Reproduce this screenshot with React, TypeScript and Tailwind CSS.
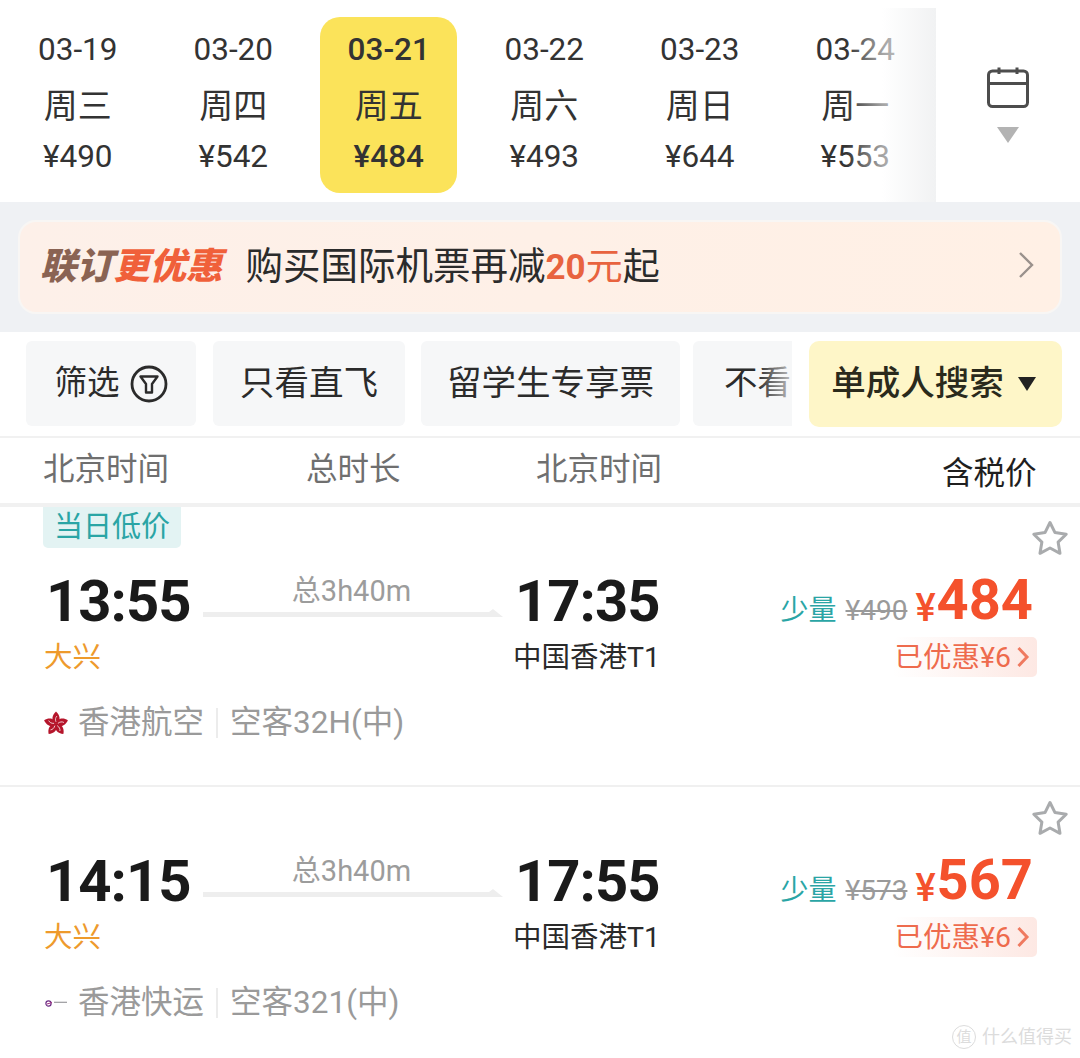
const days = [
  { d: "03-19", w: "周三", p: "¥490" },
  { d: "03-20", w: "周四", p: "¥542" },
  { d: "03-21", w: "周五", p: "¥484", on: true },
  { d: "03-22", w: "周六", p: "¥493" },
  { d: "03-23", w: "周日", p: "¥644" },
  { d: "03-24", w: "周一", p: "¥553" },
];

function Star() {
  return (
    <svg className="absolute right-[11px] top-[13px]" width="38" height="37" viewBox="0 0 38 37" fill="none">
      <path
        d="M19 2.5 L24 12.6 L35.2 14.2 L27.1 22.1 L29 33.3 L19 28 L9 33.3 L10.9 22.1 L2.8 14.2 L14 12.6 Z"
        stroke="#a9abad"
        strokeWidth="3"
        strokeLinejoin="round"
      />
    </svg>
  );
}

function CathayLogo() {
  return (
    <svg width="24" height="24" viewBox="0 0 24 24" className="shrink-0">
      {[0, 72, 144, 216, 288].map((a) => (
        <g key={a} transform={`rotate(${a} 12 13)`}>
          <path d="M12 13 C6.5 10 8 4 12 0.5 C16 4 17.5 10 12 13 Z" fill="#b5152b" />
          <path d="M12 11 C11 8.5 11.5 6.5 13 5" stroke="#fff" strokeWidth="0.7" fill="none" />
        </g>
      ))}
    </svg>
  );
}

function ExpressLogo() {
  return (
    <svg width="24" height="24" viewBox="0 0 24 24" className="shrink-0">
      <circle cx="4.5" cy="12.5" r="2.6" fill="none" stroke="#6d2c85" strokeWidth="1.2" />
      <path d="M3 13 L8 11.5" stroke="#a3307f" strokeWidth="1" />
      <path d="M10 11.3 H23" stroke="#9a9a9e" strokeWidth="1.2" />
    </svg>
  );
}

function Flight(props: {
  tag?: boolean;
  from: string;
  to: string;
  logo: React.ReactNode;
  airline: string;
  plane: string;
  old: string;
  price: string;
}) {
  return (
    <div className="relative h-[280px] border-b-2 border-[#f0f0f0] bg-white">
      <Star />
      <div className="h-[41px] pl-[43px]">
        {props.tag && (
          <div className="flex h-[41px] w-[138px] items-center justify-center rounded-b-[5px] bg-[#e3f3f3] text-[29px] leading-none text-[#2aa5a5]">
            当日低价
          </div>
        )}
      </div>
      <div className="flex h-[129px] pl-[46px]">
        <div className="w-[157px] pt-[23px]">
          <div className="text-[58px] font-bold leading-[60px] tracking-[-1px] text-[#1a1a1a]">{props.from}</div>
          <div className="-ml-[2px] mt-[7px] text-[28.5px] leading-[40px] text-[#ee9a2c]">大兴</div>
        </div>
        <div className="flex w-[300px] flex-col items-center">
          <div className="-ml-[3px] mt-[27px] text-[29px] leading-[32px] text-[#9c9c9c]">总3h40m</div>
          <svg width="300" height="9" viewBox="0 0 300 9" className="mt-[2px]">
            <path d="M0 3 H286 L290 0 L300 8 H0 Z" fill="#eeeeee" />
          </svg>
        </div>
        <div className="ml-[13px] w-[155px] pt-[23px]">
          <div className="-ml-[1px] text-[58px] font-bold leading-[60px] tracking-[-1px] text-[#1a1a1a]">{props.to}</div>
          <div className="-ml-[3px] mt-[7px] whitespace-nowrap text-[28.5px] leading-[40px] text-[#2a2a2a]">中国香港T1</div>
        </div>
        <div className="flex flex-1 flex-col items-end pr-[43px]">
          <div className="mr-[4px] flex h-[84px] items-end whitespace-nowrap">
            <span className="mb-[1px] text-[28px] leading-[40px] text-[#2aa5a5]">少量</span>
            <span className="mb-[1px] ml-[9px] text-[28px] leading-[40px] text-[#9a9a9a] line-through">{props.old}</span>
            <span className="mb-[4px] ml-[8px] text-[38px] font-medium leading-[40px] text-[#f4512c]">¥</span>
            <span className="ml-[1px] text-[56px] font-bold leading-[64px] text-[#f4512c]">{props.price}</span>
          </div>
          <div className="mt-[5px] flex h-[40px] items-center rounded-[5px] bg-[linear-gradient(90deg,#ffffff,#fde8e3)] pl-[2px] pr-[7px] text-[28.5px] leading-none text-[#ee6b4d]">
            <span className="pt-[2px]">已优惠¥6</span>
            <svg width="14" height="22" viewBox="0 0 14 22" className="ml-[5px]" fill="none">
              <path d="M2.5 2 L11 11 L2.5 20" stroke="#ef7a60" strokeWidth="3" />
            </svg>
          </div>
        </div>
      </div>
      <div className="mt-[26px] flex h-[40px] items-center pl-[44px] text-[31.5px] leading-none text-[#9a9a9a]">
        {props.logo}
        <span className="ml-[10px]">{props.airline}</span>
        <span className="ml-[12px] mr-[12px] h-[30px] w-[2px] bg-[#ececec]" />
        <span>{props.plane}</span>
      </div>
    </div>
  );
}

export default function App() {
  return (
    <div
      className="relative h-[1058px] w-[1080px] overflow-hidden bg-white"
      style={{ fontFamily: 'Roboto, "Noto Sans CJK SC", sans-serif' }}
    >
      {/* date strip */}
      <div className="flex h-[202px] bg-white">
        <div className="relative flex w-[936px] overflow-hidden pt-[17px]">
          {days.map((x) => (
            <div key={x.d} className="flex w-[155.5px] shrink-0 justify-center">
              <div
                className={
                  "flex h-[176px] w-[137px] flex-col items-center rounded-[20px] pt-[8px] text-[#333333] " +
                  (x.on ? "bg-[#fbe35a] text-[#2b2b1e]" : "")
                }
              >
                <div className={"text-[31.5px] leading-[50px] " + (x.on ? "font-medium" : "")}>{x.d}</div>
                <div className="mt-[3px] text-[34px] leading-[56px]">{x.w}</div>
                <div className={"text-[31.5px] leading-[46px] " + (x.on ? "font-medium" : "")}>{x.p}</div>
              </div>
            </div>
          ))}
          <div className="absolute bottom-0 right-0 top-[8px] w-[90px] bg-[linear-gradient(90deg,rgba(255,255,255,0),rgba(255,255,255,0.55)_40%,#f1f2f3)]" />
        </div>
        <div className="flex flex-1 flex-col items-center pt-[66px]">
          <svg width="44" height="44" viewBox="0 0 44 44" fill="none">
            <rect x="2.5" y="5" width="39" height="35.5" rx="4" stroke="#4d4d4d" strokeWidth="3" />
            <path d="M2.5 17.5 H41.5 M13 1.5 V8 M31 1.5 V8" stroke="#4d4d4d" strokeWidth="3" />
          </svg>
          <svg width="22" height="16" viewBox="0 0 22 16" className="mt-[17px]">
            <path d="M0 0 H22 L11 16 Z" fill="#b3b3b3" />
          </svg>
        </div>
      </div>

      {/* promo banner */}
      <div className="h-[130px] bg-[#eff1f4] px-[18px] pt-[18px]">
        <div className="flex h-[94px] items-center rounded-[18px] border-2 border-[#f8f6f4] bg-[linear-gradient(90deg,#fdf0e9,#fff0e5)] pl-[20px] pr-[26px]">
          <span className="text-[36.5px] font-black italic leading-none text-[#8a6353]">联订</span>
          <span className="text-[36.5px] font-black italic leading-none text-[#f0603a]">更优惠</span>
          <span className="ml-[23px] text-[37.5px] leading-none text-[#2b2b2b]">购买国际机票再减</span>
          <span className="text-[35px] font-bold leading-none text-[#e8633f]">20</span>
          <span className="text-[37px] leading-none text-[#e8633f]">元</span>
          <span className="text-[37px] leading-none text-[#2b2b2b]">起</span>
          <svg width="16" height="28" viewBox="0 0 16 28" className="ml-auto -mt-[5px]" fill="none">
            <path d="M2 2 L14 14 L2 26" stroke="#9a918c" strokeWidth="2.4" />
          </svg>
        </div>
      </div>

      {/* filter row */}
      <div className="flex h-[104px] bg-white pl-[26px] pt-[9px]">
        <div className="flex w-[766px] overflow-hidden">
          <div className="flex h-[85px] w-[170px] shrink-0 items-center justify-center rounded-[6px] bg-[#f6f7f8] text-[32.5px] text-[#2b2b2b]">
            筛选
            <svg width="38" height="38" viewBox="0 0 38 38" className="ml-[10px]" fill="none">
              <circle cx="19" cy="19" r="17" stroke="#2b2b2b" strokeWidth="2.8" />
              <path d="M10.5 11.5 H27.5 L22 19 V27.5 H16 V19 Z" stroke="#2b2b2b" strokeWidth="2.4" strokeLinejoin="round" />
            </svg>
          </div>
          <div className="ml-[17px] flex h-[85px] w-[192px] shrink-0 items-center justify-center rounded-[6px] bg-[#f6f7f8] text-[34.5px] text-[#2b2b2b]">
            只看直飞
          </div>
          <div className="ml-[16px] flex h-[85px] w-[259px] shrink-0 items-center justify-center rounded-[6px] bg-[#f6f7f8] text-[34.5px] text-[#2b2b2b]">
            留学生专享票
          </div>
          <div className="relative ml-[13px] flex h-[85px] w-[180px] shrink-0 items-center rounded-[6px] bg-[#f6f7f8] pl-[31px] text-[33.5px] text-[#2b2b2b]">
            不看
            <div className="absolute bottom-0 left-[64px] top-0 w-[36px] bg-[linear-gradient(90deg,rgba(246,247,248,0),rgba(246,247,248,0.75))]" />
          </div>
        </div>
        <div className="ml-[17px] flex h-[86px] w-[253px] items-center justify-center rounded-[10px] bg-[#fef6c8] pr-[4px] text-[34.5px] font-medium text-[#2a2a1c]">
          单成人搜索
          <svg width="18" height="14" viewBox="0 0 18 14" className="ml-[14px]">
            <path d="M0 0 H18 L9 14 Z" fill="#222222" />
          </svg>
        </div>
      </div>

      {/* column header */}
      <div className="flex h-[71px] border-t-2 border-b-[4px] border-[#f1f1f1] bg-white pl-[43px] text-[31.5px]">
        <div className="w-[263px] pt-[10px] leading-[44px] text-[#6f6f6f]">北京时间</div>
        <div className="w-[230px] pt-[10px] leading-[44px] text-[#6f6f6f]">总时长</div>
        <div className="w-[406px] pt-[10px] leading-[44px] text-[#6f6f6f]">北京时间</div>
        <div className="pt-[14px] leading-[44px] text-[#1f1f1f]">含税价</div>
      </div>

      <Flight tag from="13:55" to="17:35" logo={<CathayLogo />} airline="香港航空" plane="空客32H(中)" old="¥490" price="484" />
      <Flight from="14:15" to="17:55" logo={<ExpressLogo />} airline="香港快运" plane="空客321(中)" old="¥573" price="567" />

      {/* watermark */}
      <div className="absolute bottom-[9px] right-[8px] flex items-center text-[#dcdcdc]">
        <span className="flex h-[24px] w-[24px] items-center justify-center rounded-full border border-[#dcdcdc] text-[15px] leading-none">值</span>
        <span className="ml-[6px] text-[18px] leading-none">什么值得买</span>
      </div>
    </div>
  );
}
